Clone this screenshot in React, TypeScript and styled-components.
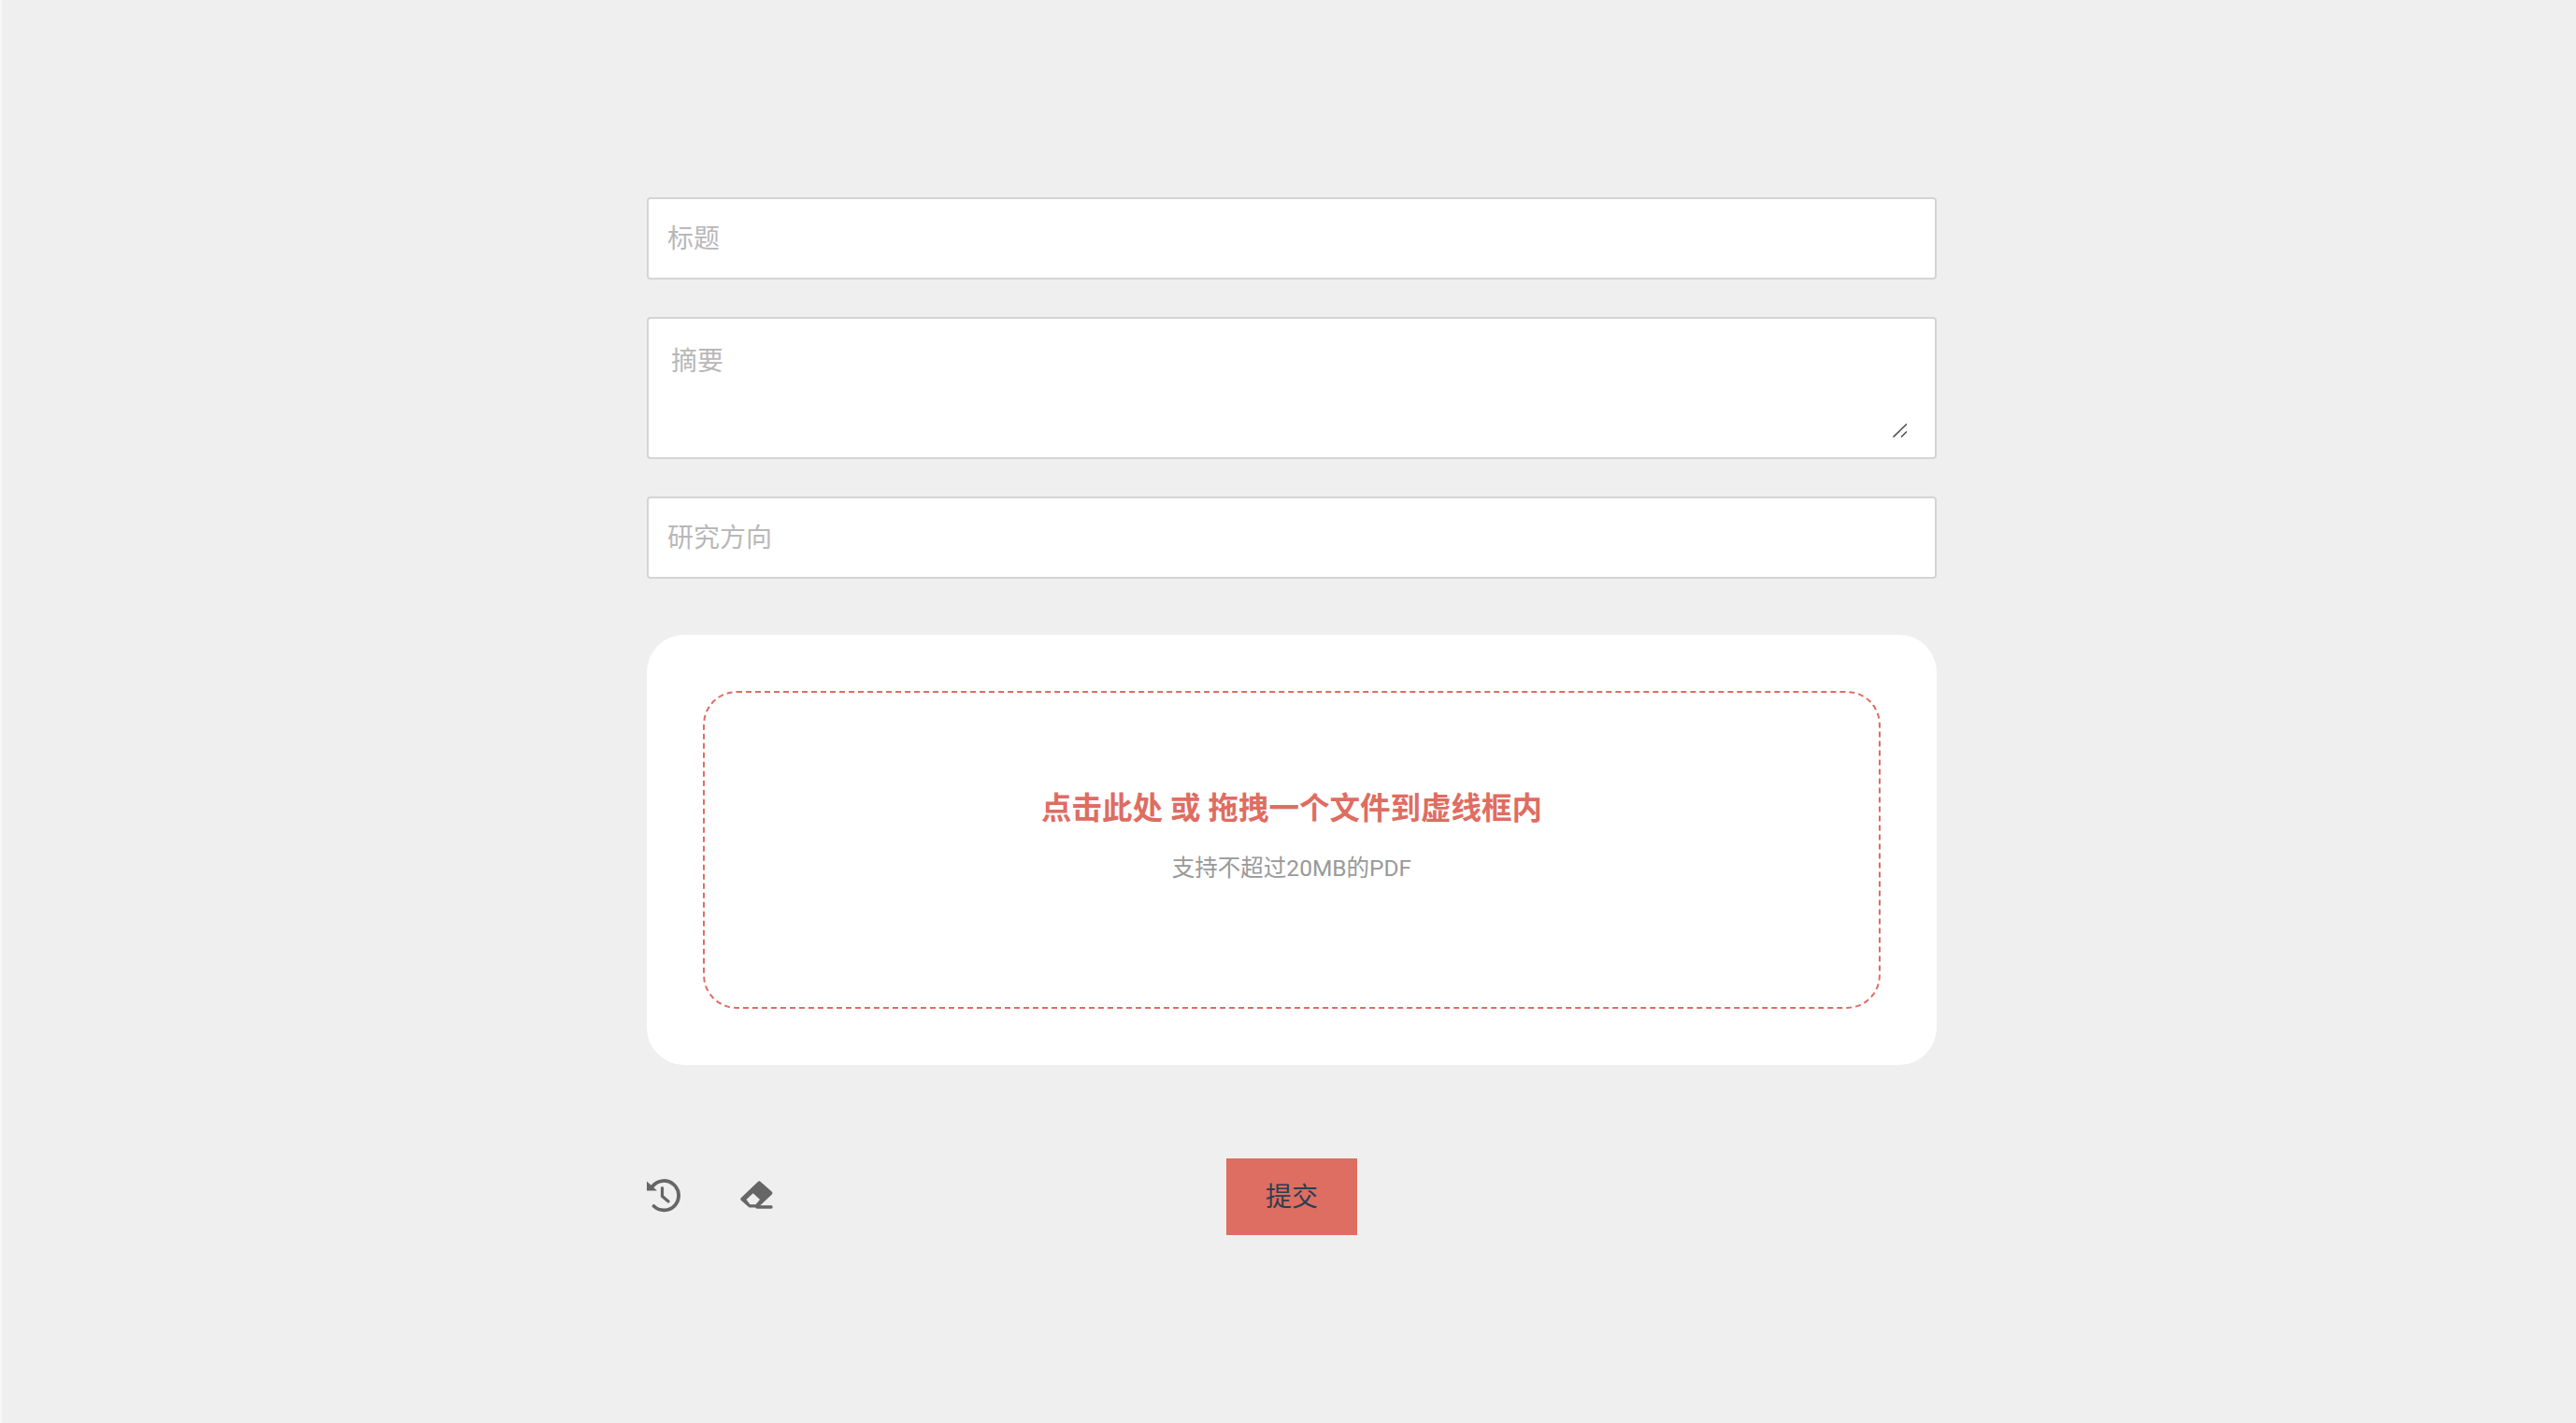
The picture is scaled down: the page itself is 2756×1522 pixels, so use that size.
import React from "react";
import styled, { createGlobalStyle } from "styled-components";

const FONT = `Roboto, "Noto Sans CJK SC", sans-serif`;
const RED = "#de6d62";

const GlobalStyle = createGlobalStyle`
  html, body {
    margin: 0;
    padding: 0;
    background: #efefef;
    font-family: ${FONT};
  }
`;

const App = () => {
  return (
    <Page>
      <GlobalStyle />
      <Form>
        <TextInput placeholder="标题" />
        <SummaryWrap>
          <Summary placeholder="摘要" />
          <Grip width="16" height="15" viewBox="0 0 16 15" fill="none">
            <path d="M0.5 14.5 L15 0.5 M9 14.5 L15 8.5" stroke="#555" strokeWidth="1.6" />
          </Grip>
        </SummaryWrap>
        <TextInput placeholder="研究方向" />
        <UploadCard>
          <DropZone>
            <DropTitle>点击此处 或 拖拽一个文件到虚线框内</DropTitle>
            <DropHint>支持不超过20MB的PDF</DropHint>
          </DropZone>
        </UploadCard>
        <Footer>
          <Tools>
            <ToolIcon width="36" height="36" viewBox="0 0 36 36" fill="none">
              <path
                d="M6 8 A15.7 15.7 0 1 1 7.5 29"
                stroke="#666"
                strokeWidth="3.8"
                strokeLinecap="round"
              />
              <path d="M0 2.5 V12.5 H11 Z" fill="#666" />
              <path
                d="M16.5 9.5 V18.5 L23 24"
                stroke="#666"
                strokeWidth="3.2"
                strokeLinecap="round"
                strokeLinejoin="round"
              />
            </ToolIcon>
            <ToolIcon width="36" height="36" viewBox="0 0 36 36" fill="none">
              <path
                fillRule="evenodd"
                d="M18.6 3.2 a2.4 2.4 0 0 1 3.4 0 L33.6 13.4 a2.4 2.4 0 0 1 0 3.4 L19 30.6 H9.6 L1 22.9 a2 2 0 0 1 0 -2.9 Z M13.7 15.2 L6.5 22 L10.4 27.2 H16.6 L21 22 Z"
                fill="#666"
              />
              <path d="M18 30 H33" stroke="#666" strokeWidth="3.4" strokeLinecap="round" />
            </ToolIcon>
          </Tools>
          <SubmitButton>提交</SubmitButton>
          <span />
        </Footer>
      </Form>
    </Page>
  );
};

export default App;

const SubmitButton = styled.button`
  width: 140px;
  height: 82px;
  border: 0;
  padding: 0 0 5px;
  background: ${RED};
  color: #2c3e50;
  font-family: ${FONT};
  font-size: 28px;
`;
const ToolIcon = styled.svg`
  display: block;
  flex: none;
`;
const Tools = styled.div`
  display: flex;
  align-items: center;
  gap: 64px;
  margin-bottom: 3px;
`;
const Footer = styled.div`
  display: grid;
  grid-template-columns: 1fr auto 1fr;
  align-items: center;
  margin-top: 100px;
`;
const DropHint = styled.div`
  margin-top: 25px;
  font-size: 24.5px;
  line-height: 34px;
  color: #999999;
`;
const DropTitle = styled.div`
  font-size: 32.5px;
  font-weight: 700;
  line-height: 44px;
  color: ${RED};
`;
const DropZone = styled.div`
  height: 340px;
  box-sizing: border-box;
  padding-top: 102px;
  border: 2px dashed ${RED};
  border-radius: 36px;
  display: flex;
  flex-direction: column;
  align-items: center;
`;
const UploadCard = styled.div`
  margin-top: 60px;
  padding: 60px;
  background: #ffffff;
  border-radius: 40px;
`;
const Grip = styled.svg`
  position: absolute;
  right: 31px;
  bottom: 23px;
`;
const Summary = styled.textarea`
  display: block;
  box-sizing: border-box;
  width: 100%;
  height: 152px;
  padding: 26px 24px 24px;
  border: 2px solid #d4d4d4;
  border-radius: 4px;
  background: #ffffff;
  outline: none;
  resize: none;
  font-family: ${FONT};
  font-size: 28px;
  line-height: 40px;
  &::placeholder {
    color: #b8b8b8;
  }
`;
const SummaryWrap = styled.div`
  position: relative;
  margin: 40px 0;
`;
const TextInput = styled.input`
  display: block;
  box-sizing: border-box;
  width: 100%;
  height: 88px;
  padding: 0 20px;
  border: 2px solid #d4d4d4;
  border-radius: 4px;
  background: #ffffff;
  outline: none;
  font-family: ${FONT};
  font-size: 28px;
  &::placeholder {
    color: #b8b8b8;
  }
`;
const Form = styled.div`
  width: 1380px;
  padding-top: 211px;
`;
const Page = styled.div`
  min-height: 1522px;
  box-sizing: border-box;
  border-left: 2px solid #f7f7f7;
  padding-left: 6px;
  display: flex;
  justify-content: center;
`;
